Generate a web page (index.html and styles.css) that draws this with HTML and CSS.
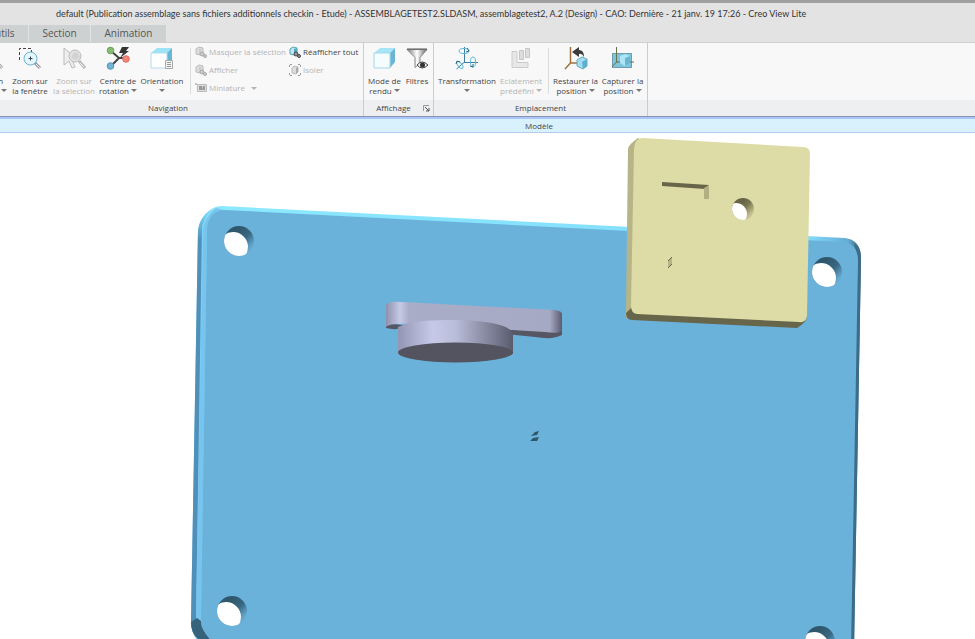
FILE: index.html
```html
<!DOCTYPE html>
<html lang="fr">
<head>
  <meta charset="UTF-8">
  <meta name="viewport" content="width=device-width, initial-scale=1.0">
  <title>Creo View Lite</title>
  <link rel="stylesheet" href="styles.css">
</head>
<body>

  <header class="title-bar">
    <h1>default (Publication assemblage sans fichiers additionnels checkin - Etude) - ASSEMBLAGETEST2.SLDASM, assemblagetest2, A.2 (Design) - CAO: Dernière - 21 janv. 19 17:26 - Creo View Lite</h1>
  </header>

  <!-- Ribbon tabs -->
  <nav class="tabs">
    <button class="tab tab-first">Outils</button>
    <button class="tab tab-section">Section</button>
    <button class="tab tab-animation">Animation</button>
  </nav>

  <!-- Ribbon -->
  <div class="ribbon">
    <section class="group group-navigation">
      <div class="group-body">
        <button class="tool tool-region">
          <svg class="icon" viewBox="0 0 24 24"><circle cx="12" cy="11" r="6" fill="#f2f2f2" stroke="#999"/><path d="M17 15l6 7" stroke="#aaa" stroke-width="3"/><path d="M18 16l5 6" stroke="#eee"/></svg>
          <span>Région<br>de vue <i class="arrow"></i></span>
        </button>
        <button class="tool">
          <svg class="icon" viewBox="0 0 24 24"><path d="M1.500 14V2.500h12v4" fill="none" stroke="#444" stroke-dasharray="3 2"/><path d="M17 17l5 5" stroke="#999" stroke-width="3"/><path d="M18 18l4 4" stroke="#eee"/><circle cx="12.500" cy="12.500" r="6.500" fill="#e5f7fd" stroke="#67b3d4"/><path d="M10.500 12.500h4M12.500 10.500v4" stroke="#345"/></svg>
          <span>Zoom sur<br>la fenêtre</span>
        </button>
        <button class="tool" disabled>
          <svg class="icon" viewBox="0 0 24 24"><path d="M2 2v17l5-4 3 7 3-1-3-7h6z" fill="#eee" stroke="#bbb"/><path d="M17 15l6 7" stroke="#bbb" stroke-width="3"/><path d="M18 17l4 4" stroke="#eee"/><circle cx="13" cy="10" r="6" fill="#e2e2e2" stroke="#bbb"/><path d="M9 12l2-5 4-1 3 5-4 3z" fill="#d2d2d2"/></svg>
          <span>Zoom sur<br>la sélection</span>
        </button>
        <button class="tool">
          <svg class="icon" viewBox="0 0 24 24"><path d="M5 5l8 7 7 0M13 12L5 20" fill="none" stroke="#444" stroke-width="2"/><path d="M16 1h7l-3 4h3l-9 7 3-5h-4z" fill="#343434"/><circle cx="4.500" cy="4.500" r="3.300" fill="#86bd72" stroke="#6ba25b"/><circle cx="4.500" cy="20" r="3.300" fill="#71b5d9" stroke="#5592b2"/><circle cx="20" cy="13" r="3.300" fill="#f28478" stroke="#dd6d63"/></svg>
          <span>Centre de<br>rotation <i class="arrow"></i></span>
        </button>
        <button class="tool">
          <svg class="icon" viewBox="0 0 24 24"><path d="M1 7l6-5h15l-5 5z" fill="#9de3f8"/><path d="M17 7l5-5v14l-5 6z" fill="#69b6d4"/><path d="M1 7h16v15H1z" fill="#fff" stroke="#b3dce9"/><path d="M15.500 14.500h7v8h-7z" fill="#f5f5f5" stroke="#aaa"/><path d="M17 16.500h4M17 18.500h4M17 20.500h4" stroke="#999"/></svg>
          <span>Orientation<br><i class="arrow"></i></span>
        </button>
        <div class="separator"></div>
        <div class="tool-list">
          <button class="small-tool" disabled>
            <svg class="small-icon" viewBox="0 0 12 12"><path d="M1 3l3-2 4 1v6L5 9 1 8z" fill="#ddd" stroke="#bbb"/><path d="M5 3v6" stroke="#bbb"/><circle cx="7" cy="8" r="2" fill="#ccc" stroke="#aaa"/><circle cx="10" cy="10" r="1.500" fill="#ccc" stroke="#aaa"/></svg>
            Masquer la sélection
          </button>
          <button class="small-tool">
            <svg class="small-icon" viewBox="0 0 12 12"><path d="M1 3l3-2 4 1v6L5 9 1 8z" fill="#b9e9f7" stroke="#5aa0bb"/><path d="M5 3l3-1v6L5 9z" fill="#5aa4c3"/><circle cx="7" cy="8" r="2" fill="#999" stroke="#444"/><circle cx="10" cy="10" r="1.500" fill="#999" stroke="#444"/></svg>
            Réafficher tout
          </button>
          <button class="small-tool" disabled>
            <svg class="small-icon" viewBox="0 0 12 12"><path d="M1 3l3-2 4 1v6L5 9 1 8z" fill="#ddd" stroke="#bbb"/><path d="M5 3v6" stroke="#bbb"/><circle cx="7" cy="8" r="2" fill="#ccc" stroke="#aaa"/><circle cx="10" cy="10" r="1.500" fill="#ccc" stroke="#aaa"/></svg>
            Afficher
          </button>
          <button class="small-tool" disabled>
            <svg class="small-icon" viewBox="0 0 12 12"><path d="M.500 3V.500H3M9 .500h2.500V3M.500 9v2.500H3M9 11.500h2.500V9" fill="none" stroke="#999" stroke-dasharray="2 1"/><path d="M3 4l2-2 4 1v5l-2 2-4-1z" fill="#ddd" stroke="#bbb"/><path d="M7 4l2-1v5L7 10z" fill="#aaa"/></svg>
            Isoler
          </button>
          <button class="small-tool" disabled>
            <svg class="small-icon" viewBox="0 0 12 12"><path d="M0 2h2" stroke="#888"/><path d="M2.500 2.500h9v7h-9z" fill="#ddd" stroke="#bbb"/><path d="M4 4h3v4H4zM8 4h2v4H7z" fill="#999"/></svg>
            Miniature <i class="arrow"></i>
          </button>
        </div>
      </div>
      <h2 class="group-label">Navigation</h2>
    </section>

    <section class="group group-display">
      <div class="group-body">
        <button class="tool tool-mode">
          <svg class="icon" viewBox="0 0 24 24"><path d="M1 7l6-5h15l-5 5z" fill="#a6e5f8"/><path d="M17 7l5-5v14l-5 6z" fill="#69b6d4"/><path d="M1 7h16v15H1z" fill="#f5fcfe" stroke="#a4d8e9"/></svg>
          <span>Mode de<br>rendu <i class="arrow"></i></span>
        </button>
        <button class="tool tool-filter">
          <svg class="icon" viewBox="0 0 24 24"><defs><linearGradient id="funnel"><stop offset="0" stop-color="#777"/><stop offset=".5" stop-color="#fff"/><stop offset="1" stop-color="#666"/></linearGradient></defs><path d="M2 3.500h20l-7 8v6l-5 4v-10z" fill="url(#funnel)" stroke="#888"/><path d="M2 3h20" stroke="#555"/><path d="M12 19q5-6 11 0-6 6-11 0z" fill="#eee" stroke="#444"/><circle cx="17.500" cy="19" r="2.500" fill="#333"/></svg>
          <span>Filtres</span>
        </button>
      </div>
      <h2 class="group-label">Affichage</h2>
      <button class="launcher" aria-label="Options d'affichage">
        <svg viewBox="0 0 7 7"><path d="M.500 6V.500H6" fill="none" stroke="#999"/><path d="M2 2l4 4M6 3v3H3" fill="none" stroke="#555"/></svg>
      </button>
    </section>

    <section class="group group-placement">
      <div class="group-body">
        <button class="tool tool-transform">
          <svg class="icon" viewBox="0 0 24 24"><path d="M9.500 1v15l-8 7M9 16.500h14" fill="none" stroke="#397e9d"/><g fill="none" stroke="#5bb8dc"><ellipse cx="9" cy="5" rx="5" ry="2.500"/><ellipse cx="18" cy="16" rx="2.500" ry="5"/><ellipse cx="5" cy="19" rx="2" ry="4" transform="rotate(-40 5 19)"/></g><path d="M12 2l2 3-3 1M15 20l3 1v-3M1 18l1-3 3 1" fill="none" stroke="#286984"/></svg>
          <span>Transformation<br><i class="arrow"></i></span>
        </button>
        <button class="tool tool-explode" disabled>
          <svg class="icon" viewBox="0 0 24 24"><path d="M3 5.500h5v11h11v5H3z" fill="#e7e7e7" stroke="#ccc"/><path d="M10.500 4.500h4v9h-4zM16.500 2.500h4v9h-4z" fill="#ddd" stroke="#c6c6c6"/></svg>
          <span>Eclatement<br>prédéfini <i class="arrow"></i></span>
        </button>
        <div class="separator"></div>
        <button class="tool tool-position">
          <svg class="icon" viewBox="0 0 24 24"><path d="M6.500 1v16L1 23M6.500 17H15" fill="none" stroke="#9c713b" stroke-width="1.500"/><path d="M13 14l5-3 5 2v7l-4 3-6-3z" fill="#a1def2" stroke="#69aac3"/><path d="M18 16l5-3v7l-4 3z" fill="#5eafcf"/><path d="M8 6l7-5v3q5 0 5 7-2-4-5-3v3z" fill="#3b3b3b"/></svg>
          <span>Restaurer la<br>position <i class="arrow"></i></span>
        </button>
        <button class="tool tool-position">
          <svg class="icon" viewBox="0 0 24 24"><path d="M1.500 7.500h19v14h-19z" fill="#7cc5dc" stroke="#235b70" stroke-dasharray="1 1"/><path d="M5.500 1v15L1 21M5 16h18" fill="none" stroke="#68714f"/><path d="M9 10l5-2 5 2v7l-5 3-5-3z" fill="#ade5f5"/><path d="M14 12l5-2v7l-5 3z" fill="#68b6d4"/></svg>
          <span>Capturer la<br>position <i class="arrow"></i></span>
        </button>
      </div>
      <h2 class="group-label">Emplacement</h2>
    </section>
  </div>

  <div class="model-bar">Modèle</div>

  <!-- 3D view -->
  <main class="viewer">
    <svg class="scene" viewBox="0 133 975 506" preserveAspectRatio="xMidYMin slice" role="img" aria-label="Modèle">
      <defs>
        <linearGradient id="shade" x1="0" y1="0" x2="1" y2="1">
          <stop offset=".3" stop-color="#2f586d"/><stop offset=".55" stop-color="#386780"/><stop offset=".8" stop-color="#65a9d0"/>
        </linearGradient>
        <linearGradient id="tan-shade" x1="0" y1="0" x2="1" y2="1">
          <stop offset=".3" stop-color="#656348"/><stop offset=".5" stop-color="#77754f"/><stop offset=".8" stop-color="#c5c392"/>
        </linearGradient>
        <linearGradient id="disc">
          <stop offset="0" stop-color="#9396b3"/><stop offset=".3" stop-color="#c6cae8"/><stop offset=".5" stop-color="#babdd9"/><stop offset=".85" stop-color="#77798f"/><stop offset="1" stop-color="#5a5b6c"/>
        </linearGradient>
        <linearGradient id="arm">
          <stop offset="0" stop-color="#8f91ac"/><stop offset=".08" stop-color="#c6cae7"/><stop offset=".13" stop-color="#a9adc7"/><stop offset=".93" stop-color="#a6a9c4"/><stop offset="1" stop-color="#5b5c70"/>
        </linearGradient>
        <linearGradient id="plate-top">
          <stop offset="0" stop-color="#75c4ef"/><stop offset=".04" stop-color="#8be9ff"/><stop offset=".92" stop-color="#83dcfb"/><stop offset=".98" stop-color="#65add5"/><stop offset="1" stop-color="#3b6882"/>
        </linearGradient>
        <linearGradient id="plate-side" x1="0" y1="0" x2="0" y2="1">
          <stop offset="0" stop-color="#7fdcfb"/><stop offset=".07" stop-color="#508fb7"/>
        </linearGradient>
        <clipPath id="hole-clip"><circle r="15"/></clipPath>
        <clipPath id="tan-clip"><circle cx="743" cy="209" r="11"/></clipPath>
        <g id="hole">
          <circle r="15" fill="url(#shade)"/>
          <circle cx="-6" cy="6" r="15" fill="#fff" clip-path="url(#hole-clip)"/>
        </g>
      </defs>

      <!-- blue plate -->
      <path d="M198 230Q199 222 205 215 212 206 222 206L845 238Q861 240 861 258L854 650H212Q191 642 191 622z" fill="url(#plate-top)"/>
      <path d="M198 230L191 622Q191 635 201 641L206 640Q196 632 196 618L202 227Q204 218 210 210 200 217 198 230z" fill="url(#plate-side)"/>
      <path d="M203 230Q205 217 216 208L224 210 207 232 201 621 212 641H206Q196 632 196 618z" fill="#77c5ef"/>
      <path d="M191 622Q191 635 201 641H213Q201 631 201 621L197 618z" fill="#36627b"/>
      <path d="M854 243Q861 248 861 258L854 650H848L857 259z" fill="#3c6c87"/>
      <path d="M207 232Q207 211 225 210L842 242Q858 243 858 261L851 650H222Q201 635 201 619z" fill="#6bb2db"/>
      <use href="#hole" x="239" y="241"/>
      <use href="#hole" x="827" y="272"/>
      <use href="#hole" x="232" y="611"/>
      <use href="#hole" x="820" y="641"/>
      <path d="M531 436l4-4 4-1-2 4zM530 441l3-3 6-1-2 4z" fill="#31566a"/>

      <!-- grey part -->
      <path d="M386 323V328Q397 331 410 326zM505 326L562 331V335Q553 340 535 337L505 334z" fill="#565765"/>
      <path d="M386 305Q388 301 402 302L555 310Q562 311 562 314V331Q558 334 545 332L512 330 410 324Q390 323 386 327z" fill="url(#arm)"/>
      <path d="M398 327Q412 319 456 320 506 321 513 333V354H398z" fill="url(#disc)"/>
      <ellipse cx="455.500" cy="352.500" rx="57.500" ry="10" fill="#53545f"/>

      <!-- beige plate -->
      <path d="M628 149Q628 145 638 138L646 143 635 311 627 319Q625 317 626 312z" fill="#b7b587"/>
      <path d="M626 313L632 307 804 319 807 316Q807 322 797 328L632 320Q626 320 626 313z" fill="#67654a"/>
      <path d="M634 149Q635 138 642 138L803 147Q810 147 810 154L807 316Q806 323 799 322L637 314Q631 313 631 306z" fill="#dddca6"/>
      <path d="M662 182L709 185 705 189 662 186z" fill="#67654a"/>
      <path d="M704 188L709 185V199H704z" fill="#b2af82"/>
      <path d="M668 261l4-4v7l-4 4z" fill="#b7b587"/>
      <path d="M668 261l4-4M668 268l4-4" stroke="#67654a" fill="none"/>
      <circle cx="743" cy="209" r="11" fill="url(#tan-shade)"/>
      <circle cx="736" cy="214" r="11" fill="#fff" clip-path="url(#tan-clip)"/>
    </svg>
  </main>

</body>
</html>
```

FILE: styles.css
```css
/* General Styles */
* {
  margin: 0;
  padding: 0;
  box-sizing: border-box;
}

body {
  display: flex;
  flex-direction: column;
  height: 100vh;
  overflow: hidden;
  background-color: #fff;
  color: #444;
  font-family: "Open Sans", "Noto Sans", sans-serif;
  font-size: 8px;
  line-height: 10px;
}

button {
  border: none;
  background: none;
  color: inherit;
  font: inherit;
  white-space: nowrap;
}

button:disabled {
  color: #b4b4b4;
}

/* Title */
.title-bar {
  padding: 4px 0 5px 56px;
  border-top: 3px solid #a0a0a0;
  background-color: #e3e3e3;
}

.title-bar h1 {
  color: #333;
  font-family: Lato, "Open Sans", sans-serif;
  font-size: 9px;
  font-weight: normal;
  line-height: 13px;
  white-space: nowrap;
}

/* Tabs */
.tabs {
  display: flex;
  gap: 1px;
  background-color: #e3e3e3;
  border-bottom: 1px solid #d0d0d0;
}

.tab {
  height: 17px;
  padding-bottom: 2px;
  background-color: #cdd1d2;
  color: #555;
  font-size: 10px;
}

.tab-first {
  width: 54px;
  margin-left: -26px;
}

.tab-section {
  width: 61px;
}

.tab-animation {
  width: 75px;
}

/* Ribbon */
.ribbon {
  display: flex;
  background: linear-gradient(#f8f8f8 57px, #eeeff1 57px);
  border-bottom: 1px solid #8b91b5;
}

.group {
  position: relative;
  border-right: 1px solid #ccc;
}

.group-navigation {
  width: 391px;
  margin-left: -27px;
}

.group-display {
  width: 70px;
}

.group-placement {
  width: 214px;
}

.group-body {
  display: flex;
  height: 57px;
}

.group-display .group-body,
.group-placement .group-body {
  padding-left: 2px;
}

.group-label {
  color: #444;
  font-size: 8px;
  font-weight: normal;
  line-height: 16px;
  text-align: center;
}

.group-display .group-label {
  padding-right: 10px;
}

.tool {
  display: flex;
  flex-direction: column;
  align-items: center;
  gap: 6px;
  flex: none;
  width: 44px;
  padding-top: 3px;
}

.tool-region {
  width: 35px;
}

.tool-mode {
  width: 37px;
}

.tool-filter {
  width: 28px;
}

.tool-transform {
  width: 62px;
}

.tool-explode {
  width: 46px;
}

.tool-position {
  width: 47px;
}

.icon {
  width: 24px;
  height: 24px;
}

.arrow {
  display: inline-block;
  border: 3px solid transparent;
  border-top-color: #777;
  border-bottom: none;
  vertical-align: 2px;
}

:disabled .arrow {
  border-top-color: #b4b4b4;
}

.separator {
  height: 46px;
  margin: 5px 3px 0 4px;
  border-left: 1px solid #ddd;
}

.group-navigation .separator {
  margin: 5px 4px 0 6px;
}

.tool-list {
  display: grid;
  grid-template-columns: 94px 70px;
  grid-auto-rows: 18px;
  align-content: start;
}

.small-tool {
  display: flex;
  align-items: center;
  gap: 2px;
}

.small-icon {
  flex: none;
  width: 12px;
  height: 12px;
}

.small-tool .arrow {
  margin-left: 4px;
}

.launcher {
  position: absolute;
  right: 3px;
  bottom: 4px;
  width: 7px;
  height: 7px;
}

.launcher svg {
  display: block;
}

/* Model View */
.model-bar {
  padding-left: 103px;
  border-top: 2px solid #a9c8f7;
  border-bottom: 1px solid #b5cef0;
  background-color: #d9f1fd;
  line-height: 13px;
  text-align: center;
}

.viewer {
  flex: 1;
  min-height: 0;
}

.scene {
  display: block;
  width: 100%;
  height: 100%;
}
```
